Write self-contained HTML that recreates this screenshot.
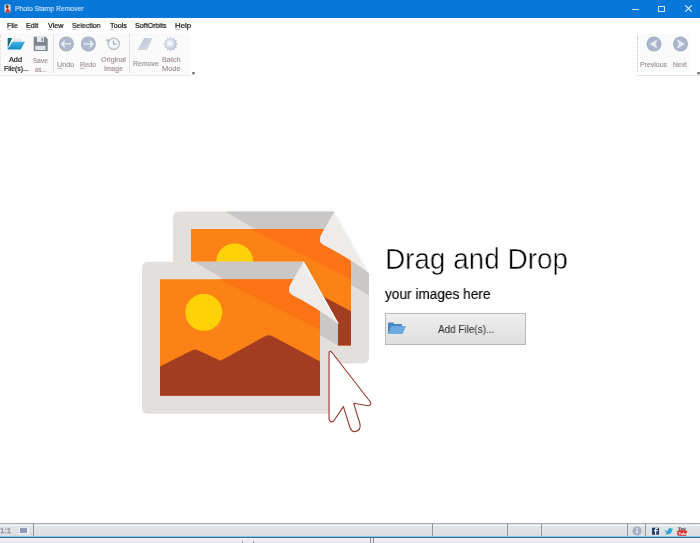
<!DOCTYPE html>
<html><head><meta charset="utf-8">
<style>
*{margin:0;padding:0;box-sizing:border-box}
html,body{width:700px;height:543px;overflow:hidden;background:#fff;-webkit-font-smoothing:antialiased;font-family:"Liberation Sans",sans-serif;position:relative}
.abs{position:absolute}
.mt,.menu,.lbl,#title .t{will-change:transform}
#title{left:0;top:0;width:700px;height:18px;background:#0877d8}
#title .t{color:#d6ecfd;-webkit-text-stroke:0.1px #d6ecfd;white-space:nowrap;line-height:1;transform-origin:0 0}
.menu{color:#111;-webkit-text-stroke:0.2px #111;white-space:nowrap;line-height:1;transform-origin:0 0}
u{text-decoration:underline;text-decoration-thickness:0.5px;text-underline-offset:1px;text-decoration-color:rgba(90,80,80,.35)}
#tb{left:1px;top:33px;width:189px;height:42px;background:#fafafa}
#tb2{left:639px;top:34px;width:50px;height:38px;background:#fafafa}
.lbl{color:#9a8c8e;-webkit-text-stroke:0.12px #9a8c8e;white-space:nowrap;line-height:1;transform-origin:0 0}
.lbl.dark{color:#222;-webkit-text-stroke:0.2px #222}
#status{left:0;top:522.5px;width:700px;height:14px;background:linear-gradient(#e2e7ea,#dcdddf);border-top:1px solid #adafb1}
#blue{left:0;top:536px;width:700px;height:2px;background:linear-gradient(#86c4e2 0,#86c4e2 45%,#356f93 55%)}
#bot{left:0;top:538px;width:700px;height:5px;background:linear-gradient(#f2f2f2,#e9e9e9)}
.mt{color:#1a1a1a;white-space:nowrap;line-height:1;transform-origin:0 0}
.sep{top:523px;width:1px;height:13px;background:#969696}
</style></head><body>
<div id="title" class="abs">
  <svg class="abs" style="left:4px;top:4px" width="7" height="9" viewBox="0 0 7 9"><rect x="0.5" y="0.5" width="6" height="8" rx="1" fill="#e9d6cf"/><path d="M1 8.5 L3.5 3.5 L6.5 8.5Z" fill="#c63a2c"/><circle cx="3.2" cy="2.6" r="1.5" fill="#4a3a36"/></svg>
  <div class="abs t" style="left:14.8px;top:4.8px;font-size:7.97px;transform:scaleX(0.85)">Photo Stamp Remover</div>
  <div class="abs" style="left:632px;top:8.5px;width:7px;height:1px;background:#cfe4f7"></div>
  <div class="abs" style="left:658px;top:5.5px;width:7px;height:6px;border:1.2px solid #cfe4f7"></div>
  <svg class="abs" style="left:685px;top:5px" width="7" height="7" viewBox="0 0 7 7"><path d="M0.3 0.3L6.7 6.7M6.7 0.3L0.3 6.7" stroke="#e3effa" stroke-width="1.1"/></svg>
</div>
<div class="abs menu" style="left:7.16px;top:21.7px;font-size:7.25px;transform:scaleX(0.926)"><u>F</u>ile</div>
<div class="abs menu" style="left:26.43px;top:21.7px;font-size:7.25px;transform:scaleX(0.976)"><u>E</u>dit</div>
<div class="abs menu" style="left:47.93px;top:21.7px;font-size:7.25px;transform:scaleX(0.993)"><u>V</u>iew</div>
<div class="abs menu" style="left:71.86px;top:21.7px;font-size:7.25px;transform:scaleX(0.952)"><u>S</u>election</div>
<div class="abs menu" style="left:109.55px;top:21.7px;font-size:7.25px;transform:scaleX(1.005)"><u>T</u>ools</div>
<div class="abs menu" style="left:135.35px;top:21.7px;font-size:7.25px;transform:scaleX(0.978)">SoftOrbits</div>
<div class="abs menu" style="left:175.07px;top:21.7px;font-size:7.25px;transform:scaleX(1.087)"><u>H</u>elp</div>

<div id="tb" class="abs"></div>
<div class="abs" style="left:0;top:35px;width:1px;height:36px;border-left:1px dotted #ddd3d5"></div>
<div class="abs" style="left:0;top:75px;width:191px;height:1px;background:#ebebeb"></div>
<div class="abs" style="left:53px;top:34px;width:1px;height:39px;background:#e2e2e2"></div>
<div class="abs" style="left:129px;top:34px;width:1px;height:39px;background:#e2e2e2"></div>
<div id="tb2" class="abs"></div>
<div class="abs" style="left:636px;top:75px;width:64px;height:1px;background:#e6e6e6"></div>
<div class="abs" style="left:637px;top:36px;width:1px;height:36px;border-left:1px dotted #c4c4c4"></div>
<div class="abs" style="left:191.5px;top:71.5px;width:3px;height:0.8px;background:#888"></div>
<svg class="abs" style="left:191.5px;top:73px" width="3" height="3" viewBox="0 0 3 3"><path d="M0 0H3L1.5 2Z" fill="#666"/></svg>
<div class="abs" style="left:696.5px;top:71.5px;width:3px;height:0.8px;background:#888"></div>
<svg class="abs" style="left:696.5px;top:73px" width="3" height="3" viewBox="0 0 3 3"><path d="M0 0H3L1.5 2Z" fill="#666"/></svg>

<!-- toolbar icons -->
<svg class="abs" style="left:0;top:30px" width="200" height="26" viewBox="0 30 200 26">
  <defs>
    <linearGradient id="gblue" x1="0" y1="0" x2="0" y2="1"><stop offset="0" stop-color="#3fb6ea"/><stop offset="1" stop-color="#1688c4"/></linearGradient>
    <linearGradient id="gera" x1="0" y1="0" x2="1" y2="1"><stop offset="0" stop-color="#b4bfd0"/><stop offset="1" stop-color="#dde2ea"/></linearGradient>
    <radialGradient id="ggear" cx="0.45" cy="0.45" r="0.55"><stop offset="0" stop-color="#ffffff"/><stop offset="0.5" stop-color="#d6deeb"/><stop offset="1" stop-color="#a5b1c6"/></radialGradient>
  </defs>
  <!-- add files folder -->
  <path d="M7.7,37.9 H12.4 L8.7,46.3 L7.7,47.5 Z" fill="#17707d"/>
  <path d="M13.5,38.8 H22 V41.8 H12.2 Z" fill="#efe6e3"/>
  <path d="M12.6,41.8 H25 L20.7,49.6 H7.7 V48 Z" fill="url(#gblue)"/>
  <path d="M12.4,38.2 L13.6,38.5 L9,47.5 L8.2,47 Z" fill="#ffffff"/>
  <!-- save floppy -->
  <path d="M33.7,36.8 H45.5 L47.7,39.2 V51 H33.7 Z" fill="#80868f"/>
  <rect x="37" y="36.8" width="7" height="5.1" fill="#e8ebf0"/>
  <rect x="41.6" y="37.8" width="1.5" height="3.2" fill="#80868f"/>
  <rect x="35.3" y="45.8" width="10.2" height="4.2" fill="#dfe2e8"/>
  <!-- undo -->
  <circle cx="66.35" cy="43.9" r="7.5" fill="#a8b2c6"/>
  <circle cx="66.35" cy="43.9" r="6.3" fill="#b0bace"/>
  <path d="M64.8,40.8 L61.8,43.9 L64.8,47 M62.3,43.9 H71" stroke="#eef1f6" stroke-width="1.3" fill="none"/>
  <!-- redo -->
  <circle cx="88.4" cy="43.9" r="7.5" fill="#a8b2c6"/>
  <circle cx="88.4" cy="43.9" r="6.3" fill="#b0bace"/>
  <path d="M89.95,40.8 L92.95,43.9 L89.95,47 M92.45,43.9 H83.75" stroke="#eef1f6" stroke-width="1.3" fill="none"/>
  <!-- original image clock -->
  <circle cx="113.8" cy="43.9" r="5.6" fill="#f6f8fb" stroke="#bcc2cf" stroke-width="1.4"/>
  <path d="M105.5,39.5 L109.5,39.2 L108.2,42.8 Z" fill="#b3b9c7"/>
  <path d="M113.4,40.5 V44.2 H116.8" stroke="#8d929c" stroke-width="0.9" fill="none"/>
  <!-- remove eraser -->
  <path d="M144.3,38.1 H152.4 L147.2,50 H137.6 Z" fill="url(#gera)"/>
  <!-- batch gear -->
  <g transform="translate(170.6,44)">
    <path id="gear" d="M0,-7.2 L1.3,-5.3 L3.6,-6.2 L3.8,-4 L6.2,-3.6 L5.3,-1.4 L7.2,0 L5.3,1.4 L6.2,3.6 L3.8,4 L3.6,6.2 L1.3,5.3 L0,7.2 L-1.3,5.3 L-3.6,6.2 L-3.8,4 L-6.2,3.6 L-5.3,1.4 L-7.2,0 L-5.3,-1.4 L-6.2,-3.6 L-3.8,-4 L-3.6,-6.2 L-1.3,-5.3 Z" fill="url(#ggear)"/>
  </g>
</svg>
<div class="abs lbl dark" style="left:9.30px;top:57.1px;font-size:7.10px;transform:scaleX(1.029)">Add</div>
<div class="abs lbl dark" style="left:3.9px;top:66.2px;font-size:6.67px;transform:scaleX(1.029)">File(s)...</div>
<div class="abs lbl" style="left:32.87px;top:57.2px;font-size:7.25px;transform:scaleX(0.905)">Save</div>
<div class="abs lbl" style="left:34.9px;top:66.4px;font-size:7.25px;transform:scaleX(0.839)">as...</div>
<div class="abs lbl" style="left:57.23px;top:60.64px;font-size:7.25px;transform:scaleX(0.991)"><u>U</u>ndo</div>
<div class="abs lbl" style="left:80.06px;top:60.64px;font-size:7.25px;transform:scaleX(0.924)"><u>R</u>edo</div>
<div class="abs lbl" style="left:101.44px;top:56.34px;font-size:7.25px;transform:scaleX(0.999)">Original</div>
<div class="abs lbl" style="left:104.39px;top:66px;font-size:6.96px;transform:scaleX(0.975)">Image</div>
<div class="abs lbl" style="left:133.1px;top:61.4px;font-size:6.96px;transform:scaleX(0.998)">Remove</div>
<div class="abs lbl" style="left:162.1px;top:57.1px;font-size:6.96px;transform:scaleX(1.044)">Batch</div>
<div class="abs lbl" style="left:161.9px;top:66.2px;font-size:6.96px;transform:scaleX(1.069)">Mode</div>
<!-- prev/next -->
<svg class="abs" style="left:640px;top:34px" width="50" height="20" viewBox="640 34 50 20">
  <circle cx="654" cy="44" r="7.5" fill="#a3afc6"/>
  <circle cx="654" cy="44" r="6.3" fill="#abb6cb"/>
  <path d="M650.3,44 L657,39.8 L655.3,44 L657,48.2 Z" fill="#e8edf5" stroke="#e8edf5" stroke-width="0.6" stroke-linejoin="round"/>
  <circle cx="680.5" cy="44" r="7.5" fill="#a3afc6"/>
  <circle cx="680.5" cy="44" r="6.3" fill="#abb6cb"/>
  <path d="M684.2,44 L677.5,39.8 L679.2,44 L677.5,48.2 Z" fill="#e8edf5" stroke="#e8edf5" stroke-width="0.6" stroke-linejoin="round"/>
</svg>
<div class="abs lbl" style="left:640.45px;top:61.6px;font-size:6.96px;transform:scaleX(0.995)">Previous</div>
<div class="abs lbl" style="left:672.96px;top:61.6px;font-size:6.96px;transform:scaleX(0.963)">Next</div>

<!-- main illustration -->
<svg class="abs" style="left:0;top:0" width="700" height="543" viewBox="0 0 700 543">
  
  <g transform="translate(173,211.4)">
      <path d="M6,0 H161 L196,61.5 V146 Q196,152 190,152 H6 Q0,152 0,146 V6 Q0,0 6,0 Z" fill="#e2dfdc"/>
      <path d="M52,0 L161,0 L196,61.5 L196,83.8 Z" fill="#c9c8c7"/>
      <path d="M18,17.5 L171,17.5 L178,29.9 L178,134 L18,134 Z" fill="#fd8216"/>
      <path d="M77,17.5 L171,17.5 L178,29.9 L178,68 Z" fill="#fb7314"/>
      <circle cx="61.75" cy="50.5" r="18.5" fill="#ffd108"/>
      <path d="M18,104.75 L50,88.5 Q53,87 56,88.5 L78.5,99 L123,74.5 Q126.75,72.5 130.5,74.5 L178,99.75 L178,134 L18,134 Z" fill="#a33d22"/>
      <path d="M161.8,-0.4 L149,21.5 Q144,30.5 150.5,33.5 Q170,43 196.7,62 Z" fill="#edeceb"/>
      <path d="M161.8,-0.4 L196.7,62 L194.8,61 L160.6,0.6 Z" fill="#f9f9f8"/>
    </g>
  <g transform="translate(142,261.8)">
      <path d="M6,0 H161 L196,61.5 V146 Q196,152 190,152 H6 Q0,152 0,146 V6 Q0,0 6,0 Z" fill="#e2dfdc"/>
      <path d="M52,0 L161,0 L196,61.5 L196,83.8 Z" fill="#c9c8c7"/>
      <path d="M18,17.5 L171,17.5 L178,29.9 L178,134 L18,134 Z" fill="#fd8216"/>
      <path d="M77,17.5 L171,17.5 L178,29.9 L178,68 Z" fill="#fb7314"/>
      <circle cx="61.75" cy="50.5" r="18.5" fill="#ffd108"/>
      <path d="M18,104.75 L50,88.5 Q53,87 56,88.5 L78.5,99 L123,74.5 Q126.75,72.5 130.5,74.5 L178,99.75 L178,134 L18,134 Z" fill="#a33d22"/>
      <path d="M161.8,-0.4 L149,21.5 Q144,30.5 150.5,33.5 Q170,43 196.7,62 Z" fill="#edeceb"/>
      <path d="M161.8,-0.4 L196.7,62 L194.8,61 L160.6,0.6 Z" fill="#f9f9f8"/>
    </g>
  <path d="M329.05,354 Q329.05,349.5 332,352.5 L370,401.5 Q372.5,405.5 368,405.8 L353.7,403.3 L360,424 Q361,430.5 355.5,431.5 Q351.5,432.2 350,427.5 L343.4,406.6 L334,420.5 Q331,423.8 329.05,419.5 Z" fill="#fff" stroke="#9c3b30" stroke-width="1.15" stroke-linejoin="round"/>
</svg>

<div class="abs mt" style="left:385.27px;top:244.1px;font-size:29.86px;transform:scaleX(0.934);-webkit-text-stroke:0.5px #fff;color:#000">Drag and Drop</div>
<div class="abs mt" style="left:385.00px;top:286.6px;font-size:14.6px;transform:scaleX(0.935);color:#000;-webkit-text-stroke:0.15px #000">your images here</div>
<div class="abs" style="left:385px;top:313px;width:141px;height:32px;border:1px solid #b9b9b9;background:linear-gradient(#efefef,#dedede)"></div>
<svg class="abs" style="left:387px;top:321px" width="20" height="14" viewBox="387 321 20 14"><path d="M388,322.6 H393 L394.5,324 H402 V326 H392 L388,333.9 Z" fill="#4a86c0"/><path d="M391.5,326 H406 L402.5,333.9 H388 Z" fill="#6aaae0"/></svg>
<div class="abs mt" style="left:438.30px;top:323.66px;font-size:10.87px;transform:scaleX(0.912);color:#2a2a2a">Add File(s)...</div>

<div id="status" class="abs"></div>
<div class="abs" style="left:0;top:524.5px;width:700px;height:1px;background:#f3f6f8"></div>
<div class="abs mt" style="left:0px;top:527px;font-size:7.6px;color:#8e94a4;-webkit-text-stroke:0.3px #8e94a4;transform:scaleX(1.05)">1:1</div>
<div class="abs" style="left:17.5px;top:526.5px;width:12px;height:8px;border:1px solid #dfe3ea;background:#f0f2f6"></div>
<div class="abs" style="left:20px;top:528.3px;width:7px;height:5px;background:#8f9bb8"></div>
<div class="abs sep" style="left:33px"></div>
<div class="abs sep" style="left:432px"></div>
<div class="abs sep" style="left:507px"></div>
<div class="abs sep" style="left:541px"></div>
<div class="abs sep" style="left:627px"></div>
<div class="abs sep" style="left:645px"></div>
<svg class="abs" style="left:630px;top:524px" width="70" height="13" viewBox="630 524 70 13">
  <circle cx="637.1" cy="530.9" r="4.6" fill="#a9b1c8"/>
  <rect x="636.4" y="529.6" width="1.4" height="3.6" fill="#eef1f6"/>
  <rect x="636.4" y="527.8" width="1.4" height="1.1" fill="#eef1f6"/>
  <rect x="652" y="527.7" width="7" height="7" fill="#1f3d66"/>
  <path d="M656.2,534.7 V531.2 H657.6 L657.8,530 H656.2 V529.3 Q656.2,528.8 656.8,528.8 H657.9 V527.7 H656.6 Q655,527.7 655,529.2 V530 H654 V531.2 H655 V534.7 Z" fill="#ffffff"/>
  <path d="M664.5,529.5 Q666,531 668,531 Q667.5,528.5 670,528 Q671,528 671.7,528.7 L673,528.2 L672.3,529.2 L673,529 Q672.5,529.8 672,530 Q672,534 667.5,534.5 Q665.5,534.6 664.3,533.6 Q666,533.8 667.2,532.8 Q665.5,532.6 665.2,531.5 Q665.8,531.6 666.2,531.4 Q664.6,530.9 664.5,529.5 Z" fill="#2ea6d9"/>
  <text x="678" y="529.8" font-family="Liberation Sans" font-size="4.2" font-weight="bold" fill="#222">You</text>
  <rect x="677.2" y="530.3" width="9.8" height="5.4" rx="1.6" fill="#d42a26"/>
  <text x="678.2" y="534.6" font-family="Liberation Sans" font-size="4.2" font-weight="bold" fill="#fff">Tube</text>
</svg>
<div id="blue" class="abs"></div>
<div id="bot" class="abs"></div>
<div class="abs" style="left:242px;top:540.5px;width:1px;height:3px;background:#8c8c8c"></div>
<div class="abs" style="left:252.5px;top:540.5px;width:1px;height:3px;background:#8c8c8c"></div>
<div class="abs" style="left:370px;top:538px;width:1px;height:5px;background:#8c8c8c"></div>
<div class="abs" style="left:373px;top:538px;width:1px;height:5px;background:#8c8c8c"></div>
</body></html>
